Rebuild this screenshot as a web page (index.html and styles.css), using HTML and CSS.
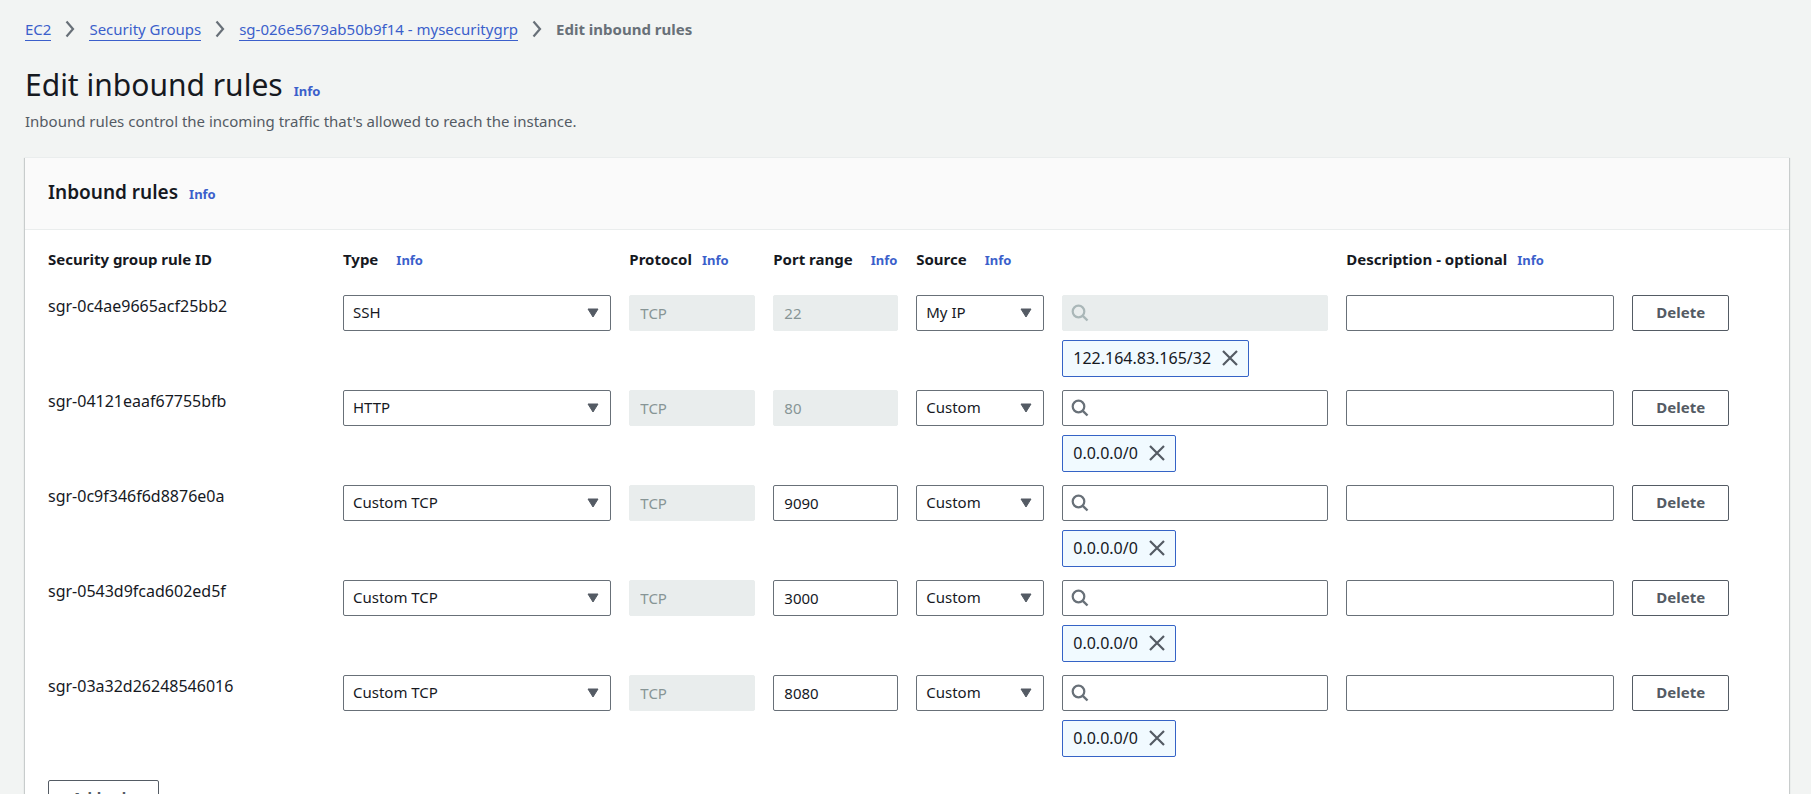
FILE: index.html
```html
<!DOCTYPE html>
<html lang="en">
<head>
<meta charset="utf-8">
<title>Edit inbound rules</title>
<link rel="stylesheet" href="styles.css">
</head>
<body>
<svg class="sprite" aria-hidden="true">
  <symbol id="chevron" viewBox="0 0 10 18"><path d="M1.5 1.5 8 9l-6.500 7.500" fill="none" stroke="currentColor" stroke-width="2.200"/></symbol>
  <symbol id="caret" viewBox="0 0 12 10"><path d="M1 1h10L6 9z" fill="currentColor" stroke="currentColor" stroke-linejoin="round"/></symbol>
  <symbol id="search" viewBox="0 0 18 18"><circle cx="7.500" cy="7.500" r="5.800" fill="none" stroke="currentColor" stroke-width="2.200"/><path d="m11.800 11.800 4.700 4.700" stroke="currentColor" stroke-width="2.400"/></symbol>
  <symbol id="close" viewBox="0 0 16 16"><path d="m1 1 14 14M15 1 1 15" fill="none" stroke="currentColor" stroke-width="2.200"/></symbol>
</svg>
<main class="page">
  <nav class="breadcrumb" aria-label="Breadcrumb">
    <a href="#">EC2</a>
    <svg class="chevron"><use href="#chevron"/></svg>
    <a href="#">Security Groups</a>
    <svg class="chevron"><use href="#chevron"/></svg>
    <a href="#">sg-026e5679ab50b9f14 - mysecuritygrp</a>
    <svg class="chevron"><use href="#chevron"/></svg>
    <span class="current">Edit inbound rules</span>
  </nav>
  <header class="heading">
    <div class="title-row"><h1>Edit inbound rules</h1><a class="info" href="#">Info</a></div>
    <p>Inbound rules control the incoming traffic that's allowed to reach the instance.</p>
  </header>
  <section class="card">
    <div class="card-header"><h2>Inbound rules</h2><a class="info" href="#">Info</a></div>
    <div class="card-body">
      <table class="rules">
        <colgroup>
          <col class="col-id"><col class="col-type"><col class="col-protocol"><col class="col-port">
          <col class="col-source"><col class="col-search"><col class="col-description"><col class="col-action">
        </colgroup>
        <thead>
          <tr>
            <th>Security group rule ID</th>
            <th>Type<a class="info wide" href="#">Info</a></th>
            <th>Protocol<a class="info" href="#">Info</a></th>
            <th>Port range<a class="info wide" href="#">Info</a></th>
            <th>Source<a class="info wide" href="#">Info</a></th>
            <th></th>
            <th>Description - optional<a class="info" href="#">Info</a></th>
            <th></th>
          </tr>
        </thead>
        <tbody>
          <tr>
            <td class="rule-id">sgr-0c4ae9665acf25bb2</td>
            <td><div class="select"><select aria-label="Type"><option>SSH</option></select><svg><use href="#caret"/></svg></div></td>
            <td><input class="field" aria-label="Protocol" value="TCP" disabled></td>
            <td><input class="field" aria-label="Port range" value="22" disabled></td>
            <td><div class="select"><select aria-label="Source"><option>My IP</option></select><svg><use href="#caret"/></svg></div></td>
            <td>
              <div class="search"><input class="field" type="text" aria-label="Source search" disabled><svg><use href="#search"/></svg></div>
              <div class="token">122.164.83.165/32<button type="button" aria-label="Remove 122.164.83.165/32"><svg><use href="#close"/></svg></button></div>
            </td>
            <td><input class="field" aria-label="Description"></td>
            <td><button class="button" type="button">Delete</button></td>
          </tr>
          <tr>
            <td class="rule-id">sgr-04121eaaf67755bfb</td>
            <td><div class="select"><select aria-label="Type"><option>HTTP</option></select><svg><use href="#caret"/></svg></div></td>
            <td><input class="field" aria-label="Protocol" value="TCP" disabled></td>
            <td><input class="field" aria-label="Port range" value="80" disabled></td>
            <td><div class="select"><select aria-label="Source"><option>Custom</option></select><svg><use href="#caret"/></svg></div></td>
            <td>
              <div class="search"><input class="field" type="text" aria-label="Source search"><svg><use href="#search"/></svg></div>
              <div class="token">0.0.0.0/0<button type="button" aria-label="Remove 0.0.0.0/0"><svg><use href="#close"/></svg></button></div>
            </td>
            <td><input class="field" aria-label="Description"></td>
            <td><button class="button" type="button">Delete</button></td>
          </tr>
          <tr>
            <td class="rule-id">sgr-0c9f346f6d8876e0a</td>
            <td><div class="select"><select aria-label="Type"><option>Custom TCP</option></select><svg><use href="#caret"/></svg></div></td>
            <td><input class="field" aria-label="Protocol" value="TCP" disabled></td>
            <td><input class="field" aria-label="Port range" value="9090"></td>
            <td><div class="select"><select aria-label="Source"><option>Custom</option></select><svg><use href="#caret"/></svg></div></td>
            <td>
              <div class="search"><input class="field" type="text" aria-label="Source search"><svg><use href="#search"/></svg></div>
              <div class="token">0.0.0.0/0<button type="button" aria-label="Remove 0.0.0.0/0"><svg><use href="#close"/></svg></button></div>
            </td>
            <td><input class="field" aria-label="Description"></td>
            <td><button class="button" type="button">Delete</button></td>
          </tr>
          <tr>
            <td class="rule-id">sgr-0543d9fcad602ed5f</td>
            <td><div class="select"><select aria-label="Type"><option>Custom TCP</option></select><svg><use href="#caret"/></svg></div></td>
            <td><input class="field" aria-label="Protocol" value="TCP" disabled></td>
            <td><input class="field" aria-label="Port range" value="3000"></td>
            <td><div class="select"><select aria-label="Source"><option>Custom</option></select><svg><use href="#caret"/></svg></div></td>
            <td>
              <div class="search"><input class="field" type="text" aria-label="Source search"><svg><use href="#search"/></svg></div>
              <div class="token">0.0.0.0/0<button type="button" aria-label="Remove 0.0.0.0/0"><svg><use href="#close"/></svg></button></div>
            </td>
            <td><input class="field" aria-label="Description"></td>
            <td><button class="button" type="button">Delete</button></td>
          </tr>
          <tr>
            <td class="rule-id">sgr-03a32d26248546016</td>
            <td><div class="select"><select aria-label="Type"><option>Custom TCP</option></select><svg><use href="#caret"/></svg></div></td>
            <td><input class="field" aria-label="Protocol" value="TCP" disabled></td>
            <td><input class="field" aria-label="Port range" value="8080"></td>
            <td><div class="select"><select aria-label="Source"><option>Custom</option></select><svg><use href="#caret"/></svg></div></td>
            <td>
              <div class="search"><input class="field" type="text" aria-label="Source search"><svg><use href="#search"/></svg></div>
              <div class="token">0.0.0.0/0<button type="button" aria-label="Remove 0.0.0.0/0"><svg><use href="#close"/></svg></button></div>
            </td>
            <td><input class="field" aria-label="Description"></td>
            <td><button class="button" type="button">Delete</button></td>
          </tr>
        </tbody>
      </table>
      <button class="button add" type="button">Add rule</button>
    </div>
  </section>
</main>
</body>
</html>
```
FILE: styles.css
```css
* { box-sizing: border-box; }

html { overflow: hidden; }

body {
  margin: 0;
  background: #f2f4f3;
  color: #16191f;
  font-family: "Noto Sans", "Open Sans", sans-serif;
  font-size: 15px;
  line-height: 24px;
}

a { color: #3b5fcb; text-decoration: none; }

.sprite { display: none; }

.page { padding: 17px 22px 0 25px; }

.breadcrumb { display: flex; align-items: center; gap: 14px; }
.breadcrumb a { border-bottom: 1px solid #3b5fcb; line-height: 22px; }
.breadcrumb .current { color: #687078; font-weight: 700; }
.chevron { width: 10px; height: 18px; color: #687078; }

.heading { padding: 23px 0 24px; }
.title-row { display: flex; align-items: baseline; gap: 11px; }
h1 { margin: 0; font-size: 30px; line-height: 42px; font-weight: 400; }
.heading p { margin: 3px 0 0; color: #545b64; }

.info { font-size: 13px; font-weight: 700; }

.card {
  background: #fff;
  border-top: 1px solid #eaeded;
  box-shadow: -1px 1px 1px #c8cccc, 1px 1px 1px #c8cccc;
}
.card-header {
  display: flex;
  align-items: baseline;
  gap: 11px;
  padding: 19px 23px 22px;
  background: #fafafa;
  border-bottom: 1px solid #eaeded;
}
h2 { margin: 0; font-size: 19px; line-height: 30px; font-weight: 600; }
.card-body { padding: 18px 23px 24px; }

.rules { width: 100%; table-layout: fixed; border-collapse: collapse; }
.col-id { width: 17.17%; }
.col-type { width: 16.67%; }
.col-protocol { width: 8.38%; }
.col-port { width: 8.32%; }
.col-source { width: 8.5%; }
.col-search { width: 16.53%; }
.col-description { width: 16.65%; }

.rules th {
  padding: 0 0 23px;
  font-weight: 700;
  line-height: 23px;
  text-align: left;
  vertical-align: baseline;
  white-space: nowrap;
}
.rules th .info { margin-left: 10px; }
.rules th .wide { margin-left: 18px; }
.rules td { padding: 0 18px 13px 0; vertical-align: top; }
.rules .rule-id { height: 95px; font-size: 16px; line-height: 22px; }
.rules td:last-child { padding-right: 0; }

.field, .select select {
  display: block;
  width: 100%;
  height: 36px;
  padding: 0 10px;
  border: 1px solid #687078;
  border-radius: 2px;
  background: #fff;
  color: #16191f;
  font: inherit;
}
.field:disabled {
  border-color: #e9eded;
  background: #e9eded;
  color: #879596;
  opacity: 1;
}

.select, .search { position: relative; }
.select select { appearance: none; padding: 0 32px 2px 9px; }
.select svg {
  position: absolute;
  top: 13px;
  right: 12px;
  width: 12px;
  height: 10px;
  color: #545b64;
  pointer-events: none;
}
.search .field { padding-left: 34px; }
.search svg {
  position: absolute;
  top: 9px;
  left: 9px;
  width: 18px;
  height: 18px;
  color: #687078;
  pointer-events: none;
}
.search .field:disabled + svg { color: #aab7b8; }

.token {
  display: flex;
  align-items: center;
  gap: 11px;
  width: fit-content;
  height: 37px;
  margin-top: 9px;
  padding: 0 10px 2px;
  border: 1px solid #3563c6;
  border-radius: 2px;
  background: #f1faff;
  font-size: 16px;
}
.token button { display: flex; padding: 0; border: 0; background: none; color: #545b64; }
.token svg { width: 16px; height: 16px; }

.button {
  height: 36px;
  padding: 0 23px 2px;
  border: 1px solid #545b64;
  border-radius: 2px;
  background: #fff;
  color: #545b64;
  font: inherit;
  font-weight: 700;
}
.add { margin-top: 10px; }
```
